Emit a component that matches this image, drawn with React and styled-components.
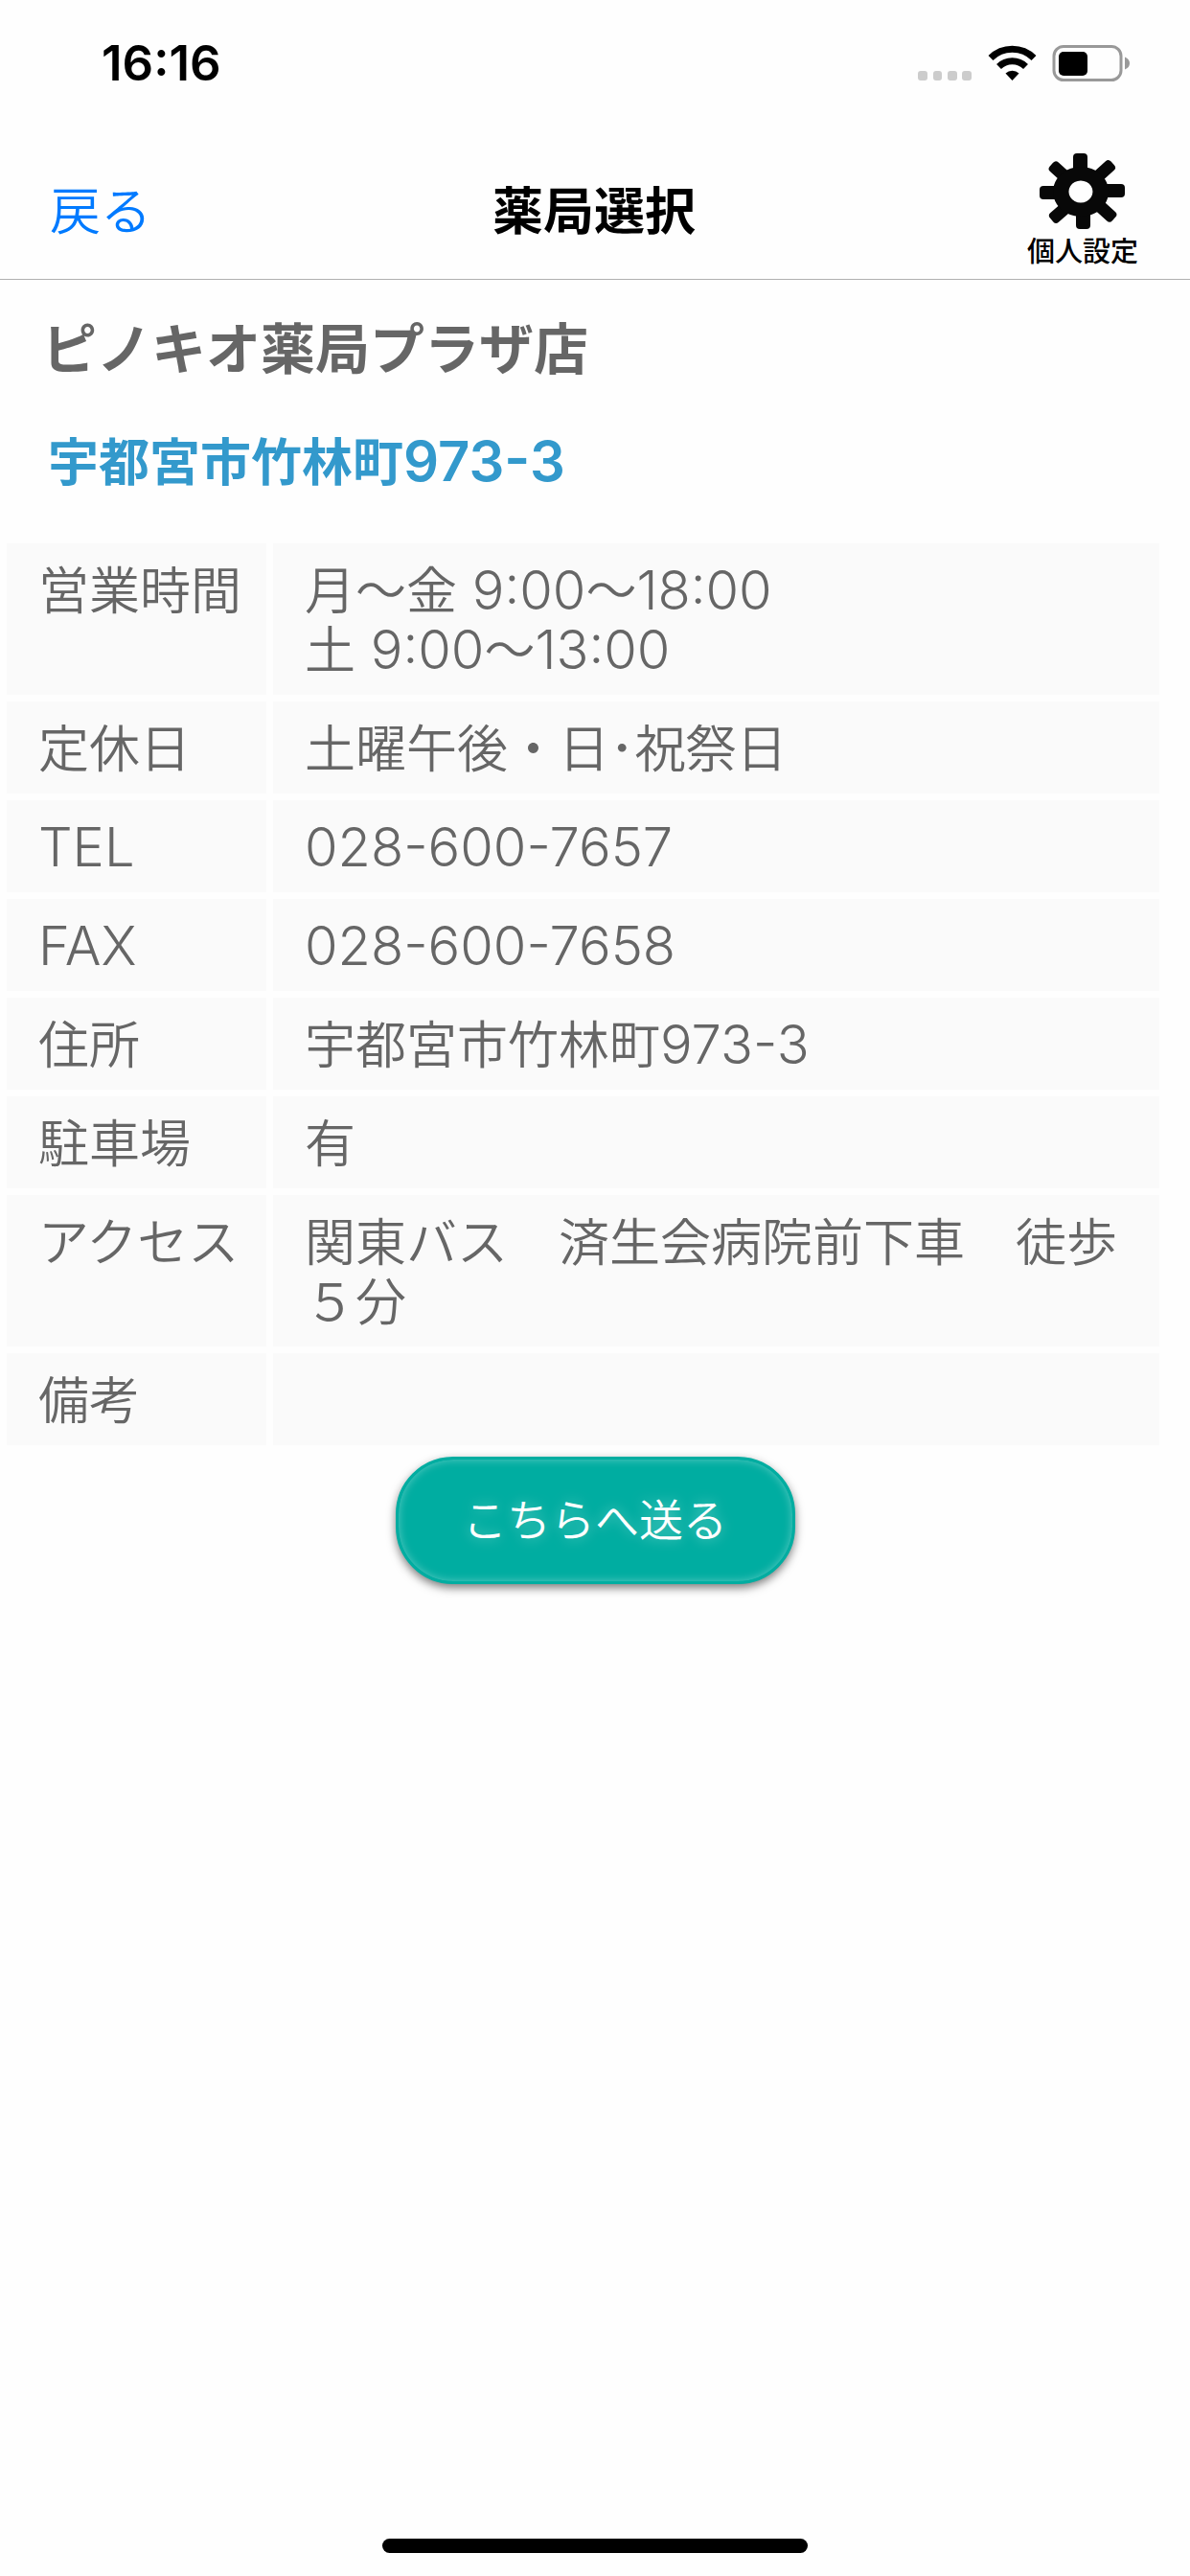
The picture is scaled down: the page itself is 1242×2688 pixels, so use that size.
import styled, { createGlobalStyle } from "styled-components";

const GlobalStyle = createGlobalStyle`
  * {
    box-sizing: border-box;
  }

  body {
    margin: 0;
    background-color: #fefefe;
    color: #666;
    font-family: "Noto Sans CJK JP", sans-serif;
  }
`;

const Container = styled.div`
  min-height: 100vh;
  display: flex;
  flex-direction: column;
`;

const StatusBar = styled.div`
  height: 132px;
  padding: 0 63px 0 106px;
  display: flex;
  align-items: center;
  justify-content: space-between;
  color: black;
`;

const Time = styled.span`
  font-family: Inter, sans-serif;
  font-size: 51px;
  font-weight: 600;
  line-height: 60px;
`;

const StatusIcons = styled.svg`
  width: 221px;
  height: 38px;
`;

const Header = styled.header`
  height: 160px;
  padding: 10px 54px 0 52px;
  border-bottom: 1px solid #b0b0b0;
  display: grid;
  grid-template-columns: 1fr auto 1fr;
  align-items: center;
  color: black;
`;

const Back = styled.a`
  justify-self: start;
  color: #007aff;
  font-size: 53px;
  font-weight: 350;
  line-height: 62px;
  text-decoration: none;
`;

const Title = styled.h1`
  margin: 0;
  font-size: 53px;
  font-weight: 700;
  line-height: 62px;
`;

const Settings = styled.button`
  justify-self: end;
  padding: 0;
  border: none;
  background: none;
  color: black;
  display: flex;
  flex-direction: column;
  align-items: center;
  gap: 7px;
  font-family: inherit;
  font-size: 29px;
  font-weight: 500;
  line-height: 28px;
  cursor: pointer;
`;

const Name = styled.h2`
  margin: 32px 0 0;
  padding: 0 44px;
  font-size: 57px;
  font-weight: 700;
  line-height: 72px;
`;

const Address = styled.a`
  align-self: flex-start;
  margin: 52px 0 57px;
  padding: 0 50px;
  color: #3399cc;
  font-size: 53px;
  font-weight: 700;
  line-height: 62px;
  text-decoration: none;
`;

const Latin = styled.span`
  font-family: Inter, "Noto Sans CJK JP", sans-serif;
  font-size: ${(props) => (props.$bold ? 58 : 56)}px;
  font-weight: ${(props) => (props.$bold ? 600 : 350)};
  line-height: 1;
`;

const Table = styled.table`
  width: 98%;
  margin: -7px 0 0;
  border-spacing: 7px;
  font-size: 53px;
  font-weight: 350;
  line-height: 62px;
`;

const Label = styled.th`
  width: 271px;
  padding: 15px 0 19px 33px;
  background-color: #fafafa;
  font-weight: 350;
  text-align: left;
  vertical-align: top;
  white-space: nowrap;
`;

const Value = styled.td`
  padding: 15px 33px 19px;
  background-color: #fafafa;
  vertical-align: top;
`;

const SendButton = styled.button`
  align-self: center;
  width: 417px;
  height: 133px;
  margin-top: 5px;
  padding: 0 0 8px;
  border: 3px solid #00ada1;
  border-radius: 60px;
  background-color: #00ada1;
  box-shadow: 0 4px 10px rgba(0, 0, 0, 0.5),
    inset 0 0 10px rgba(255, 255, 255, 0.35);
  color: white;
  font-family: inherit;
  font-size: 46px;
  font-weight: 350;
  text-shadow: 0 0 14px rgba(255, 255, 255, 0.4);
  cursor: pointer;
`;

const HomeIndicator = styled.div`
  width: 444px;
  height: 15px;
  margin: auto auto 24px;
  border-radius: 8px;
  background-color: black;
`;

const GearIcon = () => (
  <svg width="89" height="79" viewBox="0 0 89 79" fill="#080808" aria-hidden="true">
    <rect x="35" y="0" width="15" height="24" rx="4" />
    <rect x="38" y="55" width="15" height="24" rx="4" />
    <rect x="0" y="34" width="24" height="14" rx="4" />
    <rect x="64" y="32" width="25" height="14" rx="4" />
    <rect x="9" y="13" width="24" height="13" rx="4" transform="rotate(42 21 20)" />
    <rect x="55" y="12" width="24" height="13" rx="4" transform="rotate(-42 67 18)" />
    <rect x="10" y="55" width="24" height="13" rx="4" transform="rotate(-41 22 62)" />
    <rect x="57" y="54" width="24" height="13" rx="4" transform="rotate(42 69 60)" />
    <path
      fillRule="evenodd"
      d="M43 14a29 26 0 1 0 .1 0zM43 28.500a12.500 11.500 0 1 1-.1 0z"
    />
  </svg>
);

const rows = [
  {
    label: "営業時間",
    value: (
      <>
        月〜金<Latin> 9:00</Latin>〜<Latin>18:00</Latin>
        <br />
        土<Latin> 9:00</Latin>〜<Latin>13:00</Latin>
      </>
    ),
  },
  { label: "定休日", value: "土曜午後・日･祝祭日" },
  { label: <Latin>TEL</Latin>, value: <Latin>028-600-7657</Latin> },
  { label: <Latin>FAX</Latin>, value: <Latin>028-600-7658</Latin> },
  {
    label: "住所",
    value: (
      <>
        宇都宮市竹林町<Latin>973-3</Latin>
      </>
    ),
  },
  { label: "駐車場", value: "有" },
  { label: "アクセス", value: "関東バス　済生会病院前下車　徒歩５分" },
  { label: "備考", value: "" },
];

const App = () => {
  return (
    <Container>
      <GlobalStyle />
      <StatusBar>
        <Time>16:16</Time>
        <StatusIcons viewBox="0 0 221 38" aria-hidden="true">
          <g fill="#ccc">
            <rect x="0" y="27" width="10" height="10" rx="3" />
            <rect x="16" y="27" width="9" height="10" rx="3" />
            <rect x="31" y="27" width="10" height="10" rx="3" />
            <rect x="46" y="27" width="10" height="10" rx="3" />
          </g>
          <g fill="none" stroke="black" strokeWidth="7">
            <path d="M76 13.500a32 32 0 0 1 45 0" />
            <path d="M84.500 22.500a20 20 0 0 1 28 0" />
          </g>
          <path d="M98.500 37l-7-7.500a10.500 10.500 0 0 1 14 0z" />
          <rect x="142" y="1.500" width="70" height="35" rx="10" fill="none" stroke="#999" strokeWidth="3" />
          <rect x="147" y="7" width="30" height="25" rx="5" />
          <path d="M216 12.500q5 2 5 6.500t-5 6.500z" fill="#999" />
        </StatusIcons>
      </StatusBar>
      <Header>
        <Back href="#">戻る</Back>
        <Title>薬局選択</Title>
        <Settings type="button">
          <GearIcon />
          個人設定
        </Settings>
      </Header>
      <Name>ピノキオ薬局プラザ店</Name>
      <Address href="#">
        宇都宮市竹林町<Latin $bold>973-3</Latin>
      </Address>
      <Table>
        <tbody>
          {rows.map((row, i) => (
            <tr key={i}>
              <Label scope="row">{row.label}</Label>
              <Value>{row.value}</Value>
            </tr>
          ))}
        </tbody>
      </Table>
      <SendButton type="button">こちらへ送る</SendButton>
      <HomeIndicator />
    </Container>
  );
};

export default App;
